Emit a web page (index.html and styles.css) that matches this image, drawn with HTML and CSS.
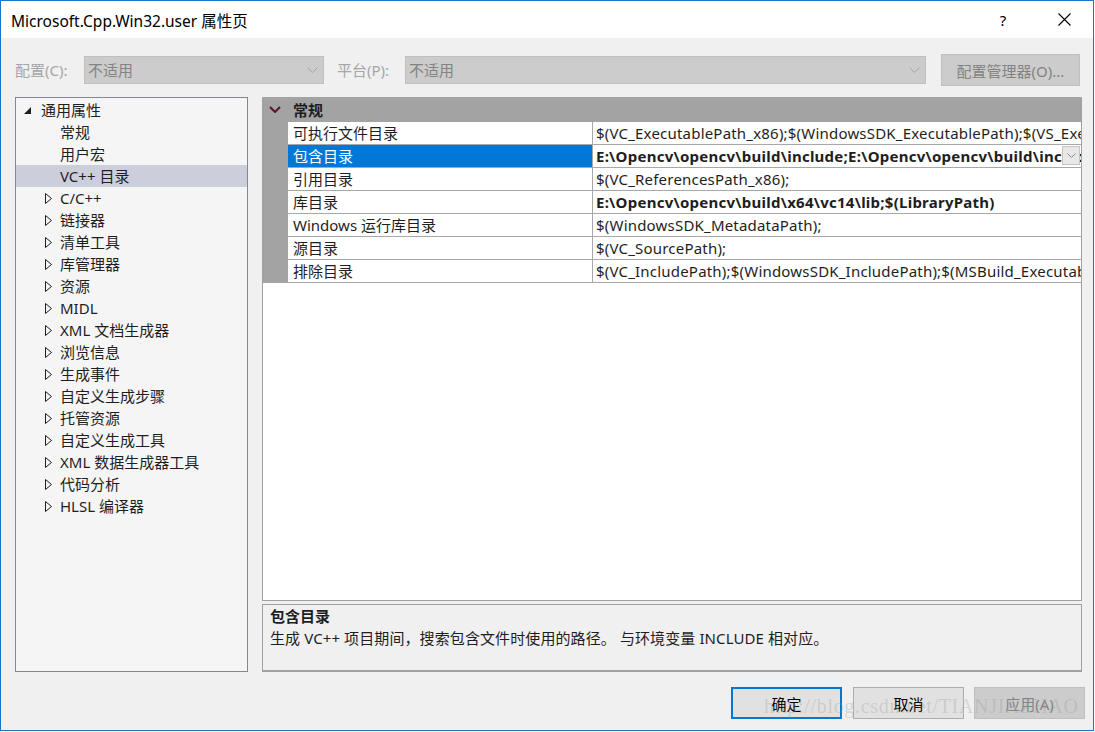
FILE: index.html
```html
<!DOCTYPE html>
<html lang="zh-CN">
<head>
<meta charset="utf-8">
<title>Microsoft.Cpp.Win32.user 属性页</title>
<link rel="stylesheet" href="styles.css">
</head>
<body>
<div class="window">
  <div class="titlebar">
    <span class="title">Microsoft.Cpp.Win32.user 属性页</span>
    <span class="tb-btn tb-help">?</span>
    <span class="tb-btn tb-close">
      <svg width="13" height="13" viewBox="0 0 13 13"><path d="M0.5 0.5 L12.5 12.5 M12.5 0.5 L0.5 12.5" stroke="#000" stroke-width="1.1" fill="none"/></svg>
    </span>
  </div>

  <div class="config-row">
    <span class="cfg-label cfg-label-config">配置(C):</span>
    <div class="combo combo-config">
      <span class="combo-text">不适用</span>
      <svg class="combo-chev" width="11" height="6" viewBox="0 0 11 6"><path d="M0.5 0.5 L5.5 5.5 L10.5 0.5" stroke="#a6a6a6" fill="none"/></svg>
    </div>
    <span class="cfg-label cfg-label-platform">平台(P):</span>
    <div class="combo combo-platform">
      <span class="combo-text">不适用</span>
      <svg class="combo-chev" width="11" height="6" viewBox="0 0 11 6"><path d="M0.5 0.5 L5.5 5.5 L10.5 0.5" stroke="#a6a6a6" fill="none"/></svg>
    </div>
    <button class="btn-cfgmgr">配置管理器(O)...</button>
  </div>

  <div class="main">
    <div class="tree">
      <div class="tree-row lvl0"><span class="exp"><svg width="7" height="7" viewBox="0 0 7 7"><path d="M7 0 L7 7 L0 7 Z" fill="#1e1e1e"/></svg></span><span>通用属性</span></div>
      <div class="tree-row leaf"><span>常规</span></div>
      <div class="tree-row leaf"><span>用户宏</span></div>
      <div class="tree-row leaf selected"><span>VC++ 目录</span></div>
      <div class="tree-row node"><span class="exp"><svg width="7" height="11" viewBox="0 0 7 11"><path d="M0.5 0.5 L6.5 5.5 L0.5 10.5 Z" fill="none" stroke="#1e1e1e"/></svg></span><span>C/C++</span></div>
      <div class="tree-row node"><span class="exp"><svg width="7" height="11" viewBox="0 0 7 11"><path d="M0.5 0.5 L6.5 5.5 L0.5 10.5 Z" fill="none" stroke="#1e1e1e"/></svg></span><span>链接器</span></div>
      <div class="tree-row node"><span class="exp"><svg width="7" height="11" viewBox="0 0 7 11"><path d="M0.5 0.5 L6.5 5.5 L0.5 10.5 Z" fill="none" stroke="#1e1e1e"/></svg></span><span>清单工具</span></div>
      <div class="tree-row node"><span class="exp"><svg width="7" height="11" viewBox="0 0 7 11"><path d="M0.5 0.5 L6.5 5.5 L0.5 10.5 Z" fill="none" stroke="#1e1e1e"/></svg></span><span>库管理器</span></div>
      <div class="tree-row node"><span class="exp"><svg width="7" height="11" viewBox="0 0 7 11"><path d="M0.5 0.5 L6.5 5.5 L0.5 10.5 Z" fill="none" stroke="#1e1e1e"/></svg></span><span>资源</span></div>
      <div class="tree-row node"><span class="exp"><svg width="7" height="11" viewBox="0 0 7 11"><path d="M0.5 0.5 L6.5 5.5 L0.5 10.5 Z" fill="none" stroke="#1e1e1e"/></svg></span><span>MIDL</span></div>
      <div class="tree-row node"><span class="exp"><svg width="7" height="11" viewBox="0 0 7 11"><path d="M0.5 0.5 L6.5 5.5 L0.5 10.5 Z" fill="none" stroke="#1e1e1e"/></svg></span><span>XML 文档生成器</span></div>
      <div class="tree-row node"><span class="exp"><svg width="7" height="11" viewBox="0 0 7 11"><path d="M0.5 0.5 L6.5 5.5 L0.5 10.5 Z" fill="none" stroke="#1e1e1e"/></svg></span><span>浏览信息</span></div>
      <div class="tree-row node"><span class="exp"><svg width="7" height="11" viewBox="0 0 7 11"><path d="M0.5 0.5 L6.5 5.5 L0.5 10.5 Z" fill="none" stroke="#1e1e1e"/></svg></span><span>生成事件</span></div>
      <div class="tree-row node"><span class="exp"><svg width="7" height="11" viewBox="0 0 7 11"><path d="M0.5 0.5 L6.5 5.5 L0.5 10.5 Z" fill="none" stroke="#1e1e1e"/></svg></span><span>自定义生成步骤</span></div>
      <div class="tree-row node"><span class="exp"><svg width="7" height="11" viewBox="0 0 7 11"><path d="M0.5 0.5 L6.5 5.5 L0.5 10.5 Z" fill="none" stroke="#1e1e1e"/></svg></span><span>托管资源</span></div>
      <div class="tree-row node"><span class="exp"><svg width="7" height="11" viewBox="0 0 7 11"><path d="M0.5 0.5 L6.5 5.5 L0.5 10.5 Z" fill="none" stroke="#1e1e1e"/></svg></span><span>自定义生成工具</span></div>
      <div class="tree-row node"><span class="exp"><svg width="7" height="11" viewBox="0 0 7 11"><path d="M0.5 0.5 L6.5 5.5 L0.5 10.5 Z" fill="none" stroke="#1e1e1e"/></svg></span><span>XML 数据生成器工具</span></div>
      <div class="tree-row node"><span class="exp"><svg width="7" height="11" viewBox="0 0 7 11"><path d="M0.5 0.5 L6.5 5.5 L0.5 10.5 Z" fill="none" stroke="#1e1e1e"/></svg></span><span>代码分析</span></div>
      <div class="tree-row node"><span class="exp"><svg width="7" height="11" viewBox="0 0 7 11"><path d="M0.5 0.5 L6.5 5.5 L0.5 10.5 Z" fill="none" stroke="#1e1e1e"/></svg></span><span>HLSL 编译器</span></div>
    </div>

    <div class="right">
      <div class="grid">
        <div class="grid-head">
          <span class="gh-chev"><svg width="12" height="7" viewBox="0 0 12 7"><path d="M1 1 L6 6 L11 1" stroke="#5e1424" stroke-width="2" fill="none"/></svg></span>
          <span class="gh-text">常规</span>
        </div>
        <div class="grow">
          <div class="gmargin"></div>
          <div class="gname">可执行文件目录</div>
          <div class="gval"><span class="gval-text">$(VC_ExecutablePath_x86);$(WindowsSDK_ExecutablePath);$(VS_ExecutablePath);$(MSBuild_ExecutablePath);$(SystemRoot)\SysWow64;$(FxCopDir);$(PATH);</span></div>
        </div>
        <div class="grow">
          <div class="gmargin"></div>
          <div class="gname sel">包含目录</div>
          <div class="gval bold"><span class="gval-text">E:\Opencv\opencv\build\include;E:\Opencv\opencv\build\include\opencv;E:\Opencv\opencv\build\include\opencv2;$(IncludePath)</span>
            <span class="drop-btn"><svg width="9" height="5" viewBox="0 0 9 5"><path d="M0.5 0.5 L4.5 4.5 L8.5 0.5" stroke="#8a8a8a" fill="none"/></svg></span>
          </div>
        </div>
        <div class="grow">
          <div class="gmargin"></div>
          <div class="gname">引用目录</div>
          <div class="gval"><span class="gval-text">$(VC_ReferencesPath_x86);</span></div>
        </div>
        <div class="grow">
          <div class="gmargin"></div>
          <div class="gname">库目录</div>
          <div class="gval bold"><span class="gval-text">E:\Opencv\opencv\build\x64\vc14\lib;$(LibraryPath)</span></div>
        </div>
        <div class="grow">
          <div class="gmargin"></div>
          <div class="gname">Windows 运行库目录</div>
          <div class="gval"><span class="gval-text">$(WindowsSDK_MetadataPath);</span></div>
        </div>
        <div class="grow">
          <div class="gmargin"></div>
          <div class="gname">源目录</div>
          <div class="gval"><span class="gval-text">$(VC_SourcePath);</span></div>
        </div>
        <div class="grow">
          <div class="gmargin"></div>
          <div class="gname">排除目录</div>
          <div class="gval"><span class="gval-text">$(VC_IncludePath);$(WindowsSDK_IncludePath);$(MSBuild_ExecutablePath);$(VC_LibraryPath_x86);</span></div>
        </div>
      </div>
      <div class="desc">
        <div class="desc-title">包含目录</div>
        <div class="desc-text">生成 VC++ 项目期间，搜索包含文件时使用的路径。 与环境变量 INCLUDE 相对应。</div>
      </div>
    </div>
  </div>

  <div class="btn-row">
    <button class="btn btn-ok">确定</button>
    <button class="btn btn-cancel">取消</button>
    <button class="btn btn-apply">应用(A)</button>
  </div>

  <div class="watermark">http://blog.csdn.net/TIANJIAZHAO</div>
</div>
</body>
</html>
```

FILE: styles.css
```css
html, body {
  margin: 0;
  padding: 0;
  background: #ffffff;
}

body {
  font-family: "Noto Sans", "Noto Sans CJK SC", sans-serif;
  font-size: 15px;
  color: #1e1e1e;
}

.window {
  width: 1094px;
  height: 731px;
  box-sizing: border-box;
  border: 1px solid #1b74c8;
  background: #f0f0f0;
  display: flex;
  flex-direction: column;
  position: relative;
  overflow: hidden;
}

/* ---------- title bar ---------- */
.titlebar {
  height: 37px;
  flex: none;
  background: #ffffff;
  display: flex;
  align-items: center;
  padding-left: 10px;
}

.title {
  flex: 1;
  font-size: 15.5px;
  color: #000;
  line-height: 20px;
  padding-top: 2px;
}

.tb-btn {
  width: 46px;
  height: 37px;
  display: flex;
  align-items: center;
  justify-content: center;
  color: #000;
}

.tb-help {
  font-size: 15px;
  margin-right: 12px;
  padding-right: 6px;
  box-sizing: border-box;
}

.tb-close {
  margin-right: 6px;
}

/* ---------- config row ---------- */
.config-row {
  flex: none;
  height: 32px;
  margin-top: 16px;
  padding-left: 14px;
  display: flex;
  align-items: center;
}

.cfg-label {
  color: #a6a6a6;
  line-height: 20px;
  white-space: nowrap;
}

.cfg-label-config {
  width: 69px;
}

.cfg-label-platform {
  width: 68px;
  margin-left: 13px;
}

.combo {
  height: 28px;
  box-sizing: border-box;
  background: #cccccc;
  border: 1px solid #bfbfbf;
  display: flex;
  align-items: center;
  justify-content: space-between;
  padding: 0 5px 0 3px;
}

.combo-config {
  width: 240px;
}

.combo-platform {
  width: 521px;
}

.combo-text {
  color: #838383;
  line-height: 20px;
}

.btn-cfgmgr {
  width: 139px;
  height: 32px;
  margin-left: 15px;
  box-sizing: border-box;
  background: #cccccc;
  border: 1px solid #bfbfbf;
  color: #838383;
  font: inherit;
  padding: 0;
}

/* ---------- main ---------- */
.main {
  flex: none;
  height: 575px;
  margin-top: 11px;
  padding-left: 14px;
  display: flex;
  gap: 14px;
}

.tree {
  width: 233px;
  box-sizing: border-box;
  border: 1px solid #828790;
  background: #f5f5f5;
  padding-top: 1px;
}

.tree-row {
  height: 22px;
  line-height: 22px;
  display: flex;
  align-items: center;
  white-space: nowrap;
  color: #1e1e1e;
}

.tree-row .exp {
  display: flex;
  align-items: center;
}

.tree-row.lvl0 {
  padding-left: 8px;
}

.tree-row.lvl0 .exp {
  width: 17px;
}

.tree-row.leaf {
  padding-left: 44px;
}

.tree-row.node {
  padding-left: 29px;
}

.tree-row.node .exp {
  width: 15px;
}

.tree-row.selected {
  background: #cccedb;
}

.right {
  width: 820px;
  display: flex;
  flex-direction: column;
  gap: 3px;
}

/* ---------- property grid ---------- */
.grid {
  flex: 1;
  box-sizing: border-box;
  border: 1px solid #a0a0a0;
  border-top: none;
  background: #ffffff;
  overflow: hidden;
}

.grid-head {
  height: 25px;
  background: #a3a3a3;
  display: flex;
  align-items: center;
  padding-left: 6px;
}

.gh-chev {
  width: 24px;
  display: flex;
  align-items: center;
}

.gh-text {
  font-weight: bold;
  line-height: 22px;
  color: #1e1e1e;
}

.grow {
  height: 23px;
  display: flex;
}

.gmargin {
  width: 25px;
  flex: none;
  background: #a3a3a3;
}

.gname {
  width: 305px;
  flex: none;
  box-sizing: border-box;
  border-right: 1px solid #a8a8a8;
  border-bottom: 1px solid #a8a8a8;
  padding-left: 5px;
  line-height: 22px;
  white-space: nowrap;
  overflow: hidden;
}

.gname.sel {
  background: #0078d7;
  color: #ffffff;
}

.gval {
  flex: 1;
  min-width: 0;
  box-sizing: border-box;
  border-bottom: 1px solid #a8a8a8;
  padding-left: 3px;
  line-height: 22px;
  white-space: nowrap;
  overflow: hidden;
  position: relative;
}

.gval-text {
  letter-spacing: 0.2px;
}

.gval.bold {
  font-weight: bold;
}

.gval.bold .gval-text {
  letter-spacing: 0.25px;
}

.drop-btn {
  position: absolute;
  right: 1px;
  top: 1px;
  width: 18px;
  height: 19px;
  box-sizing: border-box;
  background: #e8e8e8;
  border: 1px solid #c4c4c4;
  display: flex;
  align-items: center;
  justify-content: center;
}

/* ---------- description ---------- */
.desc {
  height: 68px;
  flex: none;
  box-sizing: border-box;
  border: 1px solid #a0a0a0;
  border-bottom-width: 2px;
  background: #f0f0f0;
  padding: 0 7px;
}

.desc-title {
  font-weight: bold;
  line-height: 22px;
}

.desc-text {
  line-height: 22px;
  white-space: nowrap;
  letter-spacing: 0.1px;
}

/* ---------- buttons ---------- */
.btn-row {
  flex: none;
  height: 32px;
  margin-top: 15px;
  display: flex;
  justify-content: flex-end;
  padding-right: 8px;
}

.btn {
  width: 111px;
  height: 32px;
  box-sizing: border-box;
  background: #e1e1e1;
  border: 1px solid #adadad;
  color: #000;
  font: inherit;
  padding: 0;
}

.btn-ok {
  border: 2px solid #0078d7;
}

.btn-cancel {
  margin-left: 11px;
}

.btn-apply {
  margin-left: 10px;
  background: #cccccc;
  border-color: #bfbfbf;
  color: #838383;
}

/* ---------- watermark ---------- */
.watermark {
  position: absolute;
  left: 763px;
  top: 694px;
  font-family: "Liberation Serif", serif;
  font-size: 20px;
  letter-spacing: 0.7px;
  color: rgba(150, 150, 150, 0.3);
  white-space: nowrap;
  pointer-events: none;
}
```
